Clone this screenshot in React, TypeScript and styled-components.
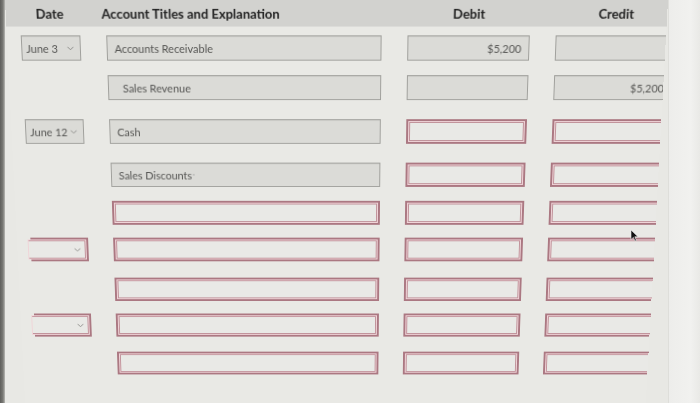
import React from 'react';
import styled, { createGlobalStyle, css } from 'styled-components';

const GlobalStyle = createGlobalStyle`
  html, body {
    margin: 0;
    padding: 0;
    background: #e8e8e4;
  }
  body {
    font-family: Lato, "Open Sans", "Liberation Sans", sans-serif;
  }
`;

type Tone = 'filled' | 'error';

interface Cell {
  tone: Tone;
  text?: string;
}

interface Row {
  date?: Cell;
  account: Cell;
  debit: Cell;
  credit: Cell;
  indent?: boolean;
  space: number; // gap above the row
}

const rows: Row[] = [
  {
    date: { tone: 'filled', text: 'June 3' },
    account: { tone: 'filled', text: 'Accounts Receivable' },
    debit: { tone: 'filled', text: '$5,200' },
    credit: { tone: 'filled' },
    space: 9,
  },
  {
    account: { tone: 'filled', text: 'Sales Revenue' },
    debit: { tone: 'filled' },
    credit: { tone: 'filled', text: '$5,200' },
    indent: true,
    space: 15,
  },
  {
    date: { tone: 'filled', text: 'June 12' },
    account: { tone: 'filled', text: 'Cash' },
    debit: { tone: 'error' },
    credit: { tone: 'error' },
    space: 20,
  },
  {
    account: { tone: 'filled', text: 'Sales Discounts' },
    debit: { tone: 'error' },
    credit: { tone: 'error' },
    space: 20,
  },
  { account: { tone: 'error' }, debit: { tone: 'error' }, credit: { tone: 'error' }, space: 15 },
  {
    date: { tone: 'error' },
    account: { tone: 'error' },
    debit: { tone: 'error' },
    credit: { tone: 'error' },
    space: 14,
  },
  { account: { tone: 'error' }, debit: { tone: 'error' }, credit: { tone: 'error' }, space: 18 },
  {
    date: { tone: 'error' },
    account: { tone: 'error' },
    debit: { tone: 'error' },
    credit: { tone: 'error' },
    space: 14,
  },
  { account: { tone: 'error' }, debit: { tone: 'error' }, credit: { tone: 'error' }, space: 17 },
];

const Page = styled.div`
  position: relative;
  display: flex;
  width: 700px;
  height: 403px;
  overflow: hidden;
  background: #e8e8e4;
`;

const Bezel = styled.div`
  width: 5px;
  flex-shrink: 0;
  background: linear-gradient(90deg, #5e5e5b 0%, #7a7a76 60%, #b9b9b5 100%);
`;

const Main = styled.div`
  width: 663px;
  flex-shrink: 0;
`;

const EdgeStrip = styled.div`
  flex: 1;
  background: linear-gradient(90deg, #ededeb 0%, #f1f1ef 70%, #e9e9e6 100%);
  border-left: 1px solid #dededa;
`;

const Sheet = styled.div`
  width: 663px;
  min-height: 520px;
  overflow: hidden;
  background: #e9e9e5;
  transform-origin: 315px 0;
  transform: perspective(1000px) rotateX(-9deg);
`;

const grid = css`
  display: grid;
  grid-template-columns: 60px 277px 123px 120px;
  column-gap: 26px;
  padding-left: 14px;
`;

const Header = styled.div`
  ${grid};
  height: 27px;
  align-items: center;
  background: #d2d2cf;
  color: #222;
  font-size: 13px;
  font-weight: 700;
`;

const HeadCell = styled.div<{ $align: 'left' | 'center' }>`
  text-align: ${p => p.$align};
  margin-left: ${p => (p.$align === 'left' ? '-4px' : '0')};
  white-space: nowrap;
`;

const Body = styled.div`
  display: flex;
  flex-direction: column;
`;

const Line = styled.div<{ $space: number }>`
  ${grid};
  height: 26px;
  margin-top: ${p => p.$space}px;
`;

const Field = styled.div<{ $tone: Tone; $align?: 'left' | 'right'; $indent?: boolean; $openLeft?: boolean }>`
  position: relative;
  box-sizing: border-box;
  height: 26px;
  display: flex;
  align-items: center;
  justify-content: ${p => (p.$align === 'right' ? 'flex-end' : 'space-between')};
  padding: 0 ${p => (p.$align === 'right' ? '7px' : '6px')} 0 ${p => (p.$indent ? '14px' : '7px')};
  font-size: 11px;
  color: #555553;
  white-space: nowrap;
  ${p =>
    p.$tone === 'filled'
      ? css`
          background: #dbdbd7;
          border: 1px solid #a0a09c;
          box-shadow: inset 0 1px 0 #d0d0cc;
        `
      : css`
          background: #e9e9e6;
          border: 2px solid #ab7882;
          &::before {
            content: '';
            position: absolute;
            inset: 1px;
            border: 1px solid #c1939b;
            box-shadow: 0 0 0 1px #f0d4d8;
          }
        `}
  ${p =>
    p.$openLeft &&
    css`
      border-left: none;
      &::before {
        left: -2px;
        border-left: none;
      }
    `}
`;

const DateField = styled(Field)`
  padding-left: 4px;
`;

const Caret = styled.span`
  margin-left: 1px;
  font-size: 8px;
  color: #888;
  align-self: flex-start;
  padding-top: 5px;
`;

const Chevron = () => (
  <svg width="7" height="5" viewBox="0 0 7 5">
    <polyline points="0.5,0.8 3.5,3.8 6.5,0.8" fill="none" stroke="#8f8f8c" strokeWidth="1" />
  </svg>
);

const Pointer = styled.svg`
  position: absolute;
  left: 630px;
  top: 229px;
`;

const App: React.FC = () => {
  return (
    <Page>
      <GlobalStyle />
      <Bezel />
      <Main>
        <Sheet>
          <Header>
            <HeadCell $align="center">Date</HeadCell>
            <HeadCell $align="left">Account Titles and Explanation</HeadCell>
            <HeadCell $align="center">Debit</HeadCell>
            <HeadCell $align="center">Credit</HeadCell>
          </Header>
          <Body>
            {rows.map((row, i) => (
              <Line key={i} $space={row.space}>
                {row.date ? (
                  <DateField $tone={row.date.tone} $openLeft={row.date.tone === 'error'}>
                    <span>{row.date.text}</span>
                    <Chevron />
                  </DateField>
                ) : (
                  <div />
                )}
                <Field $tone={row.account.tone} $indent={row.indent}>
                  <span>
                    {row.account.text}
                    {row.account.text === 'Sales Discounts' && <Caret>'</Caret>}
                  </span>
                </Field>
                <Field $tone={row.debit.tone} $align="right">
                  {row.debit.text}
                </Field>
                <Field $tone={row.credit.tone} $align="right">
                  {row.credit.text}
                </Field>
              </Line>
            ))}
          </Body>
        </Sheet>
      </Main>
      <EdgeStrip />
      <Pointer width="9" height="13" viewBox="0 0 9 13">
        <path d="M1 1 L1 10.5 L3.4 8.4 L5 12 L6.4 11.4 L4.8 7.8 L8 7.8 Z" fill="#111" stroke="#eee" strokeWidth="0.6" />
      </Pointer>
    </Page>
  );
};

export default App;
